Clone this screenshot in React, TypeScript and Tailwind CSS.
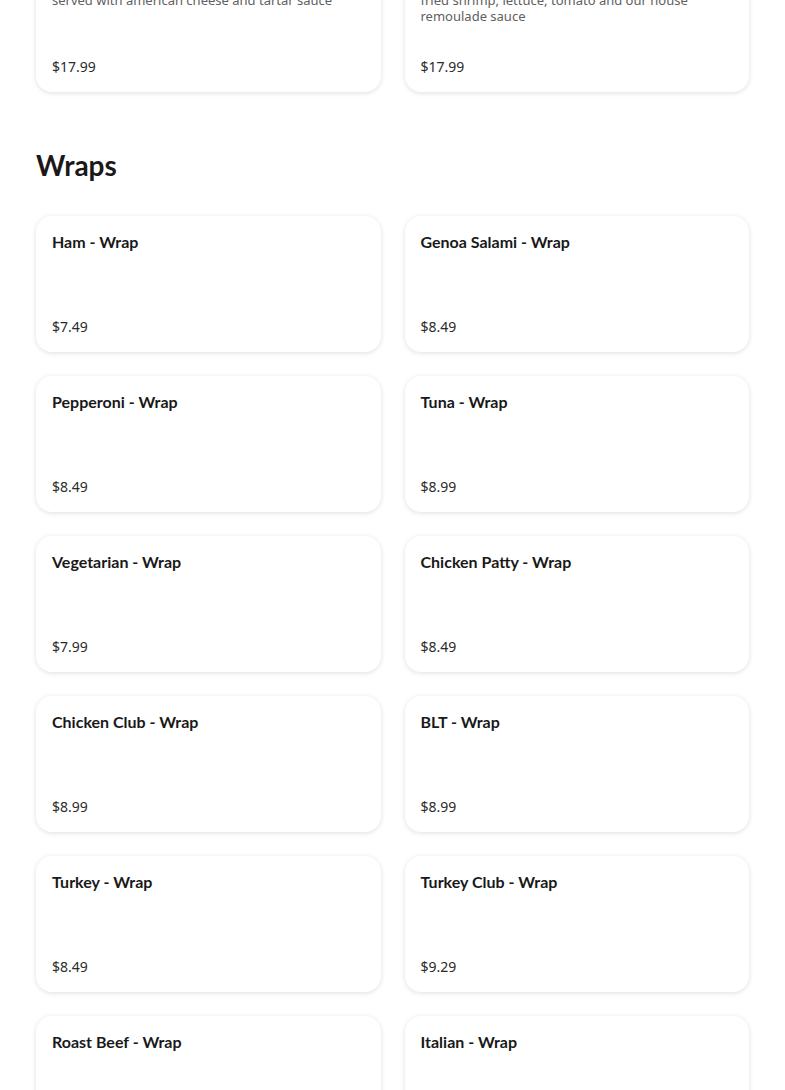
const wraps = [
    { name: "Ham - Wrap", price: "$7.49" },
    { name: "Genoa Salami - Wrap", price: "$8.49" },
    { name: "Pepperoni - Wrap", price: "$8.49" },
    { name: "Tuna - Wrap", price: "$8.99" },
    { name: "Vegetarian - Wrap", price: "$7.99" },
    { name: "Chicken Patty - Wrap", price: "$8.49" },
    { name: "Chicken Club - Wrap", price: "$8.99" },
    { name: "BLT - Wrap", price: "$8.99" },
    { name: "Turkey - Wrap", price: "$8.49" },
    { name: "Turkey Club - Wrap", price: "$9.29" },
    { name: "Roast Beef - Wrap", price: "$8.49" },
    { name: "Italian - Wrap", price: "$8.99" },
];

function ItemCard(props: { name: string; price: string; desc?: string }) {
    return (
        <div className="min-h-[136px] flex flex-col rounded-2xl bg-white p-4 shadow-[0_1px_5px_rgba(0,0,0,0.13)]">
            <h3 className="text-[16px] leading-5 font-bold text-[#191919] font-['Lato',sans-serif]">
                {props.name}
            </h3>
            {props.desc && (
                <p className="text-[13px] leading-4 text-[#606060] font-['Noto_Sans',sans-serif]">
                    {props.desc}
                </p>
            )}
            <div className="flex-1" />
            <span className="text-[14px] leading-[18px] text-[#2b2b2b] font-['Noto_Sans',sans-serif]">
                {props.price}
            </span>
        </div>
    );
}

export default function App() {
    return (
        <div className="min-h-[1090px] bg-white px-9 overflow-hidden">
            <div className="-mt-[44px] grid grid-cols-2 gap-6">
                <ItemCard
                    name="Fish Sandwich"
                    desc="served with american cheese and tartar sauce"
                    price="$17.99"
                />
                <ItemCard
                    name="Shrimp Po' Boy"
                    desc="fried shrimp, lettuce, tomato and our house remoulade sauce"
                    price="$17.99"
                />
            </div>
            <section className="mt-[55px]">
                <h2 className="text-[28px] leading-9 font-bold text-[#191919] font-['Lato',sans-serif]">
                    Wraps
                </h2>
                <div className="mt-[33px] grid grid-cols-2 gap-6">
                    {wraps.map((w) => (
                        <ItemCard key={w.name} name={w.name} price={w.price} />
                    ))}
                </div>
            </section>
        </div>
    );
}
